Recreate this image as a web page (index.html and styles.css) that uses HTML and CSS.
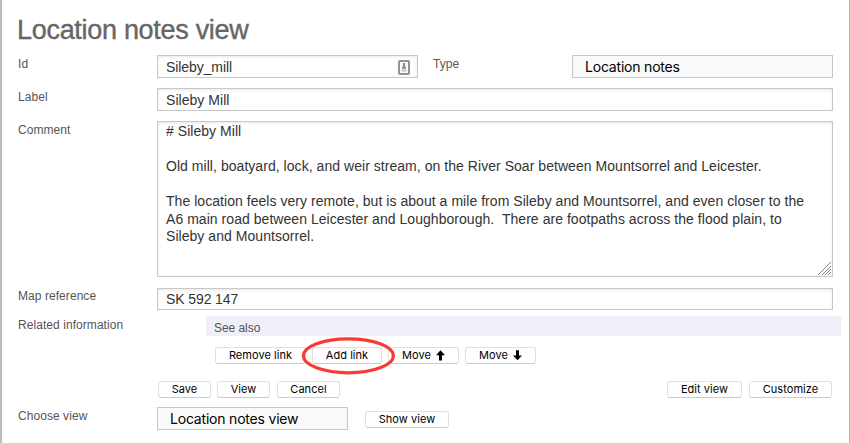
FILE: index.html
```html
<!DOCTYPE html>
<html lang="en">
<head>
<meta charset="utf-8">
<title>Location notes view</title>
<link rel="stylesheet" href="styles.css">
</head>
<body>
<main class="page">
  <h1>Location notes view</h1>
  <div class="row row-id">
    <label>Id</label>
    <div class="field id-field"><span>Sileby_mill</span>
      <svg class="card" width="12" height="15" viewBox="0 0 12 15"><rect x="1" y="1" width="10" height="13" rx="1" fill="#fafafa" stroke="#929292" stroke-width="2"/><path d="M6 3v4" stroke="#888" stroke-width="2"/><path d="M4 6.5h4V9H4z" fill="#999"/><path d="M3.5 10.5h5" stroke="#c0c0c0" stroke-width="2"/></svg>
    </div>
    <label class="type-label">Type</label>
    <div class="select type-select">Location notes</div>
  </div>
  <div class="row row-label">
    <label>Label</label>
    <div class="field wide">Sileby Mill</div>
  </div>
  <div class="row row-comment">
    <label>Comment</label>
    <div class="area"><p># Sileby Mill

Old mill, boatyard, lock, and weir stream, on the River Soar between Mountsorrel and Leicester.

The location feels very remote, but is about a mile from Sileby and Mountsorrel, and even closer to the
A6 main road between Leicester and Loughborough.  There are footpaths across the flood plain, to
Sileby and Mountsorrel.</p>
      <svg class="grip" width="13" height="13" viewBox="0 0 13 13" shape-rendering="crispEdges"><path d="M0 13 13 0M4 13 13 4M7 13 13 7M10 13 13 10" stroke="#858585"/></svg>
    </div>
  </div>
  <div class="row row-map">
    <label>Map reference</label>
    <div class="field wide map">SK 592 147</div>
  </div>
  <div class="row row-related">
    <label>Related information</label>
    <div class="related">
      <div class="see">See also</div>
      <div class="buttons links">
        <button class="b-remove">Remove link</button>
        <div class="marked"><button class="b-add">Add link</button>
          <svg class="ring" width="96" height="42" viewBox="0 0 96 42"><ellipse cx="47.4" cy="19.8" rx="45" ry="17" fill="none" stroke="#f93a34" stroke-width="3.2"/></svg>
        </div>
        <button class="b-up">Move<svg width="9" height="11" viewBox="0 0 9 11"><path d="M4.5.2 9 5.2H6v5.3H3V5.2H0z"/></svg></button>
        <button class="b-down">Move<svg width="9" height="11" viewBox="0 0 9 11"><path d="M4.5 10.3 9 5.4H6V.2H3v5.2H0z"/></svg></button>
      </div>
    </div>
  </div>
  <div class="row row-actions">
    <div class="buttons">
      <button class="b-save">Save</button>
      <button class="b-view">View</button>
      <button class="b-cancel">Cancel</button>
    </div>
    <div class="buttons right">
      <button class="b-edit">Edit view</button>
      <button class="b-custom">Customize</button>
    </div>
  </div>
  <div class="row row-choose">
    <label>Choose view</label>
    <div class="select view-select">Location notes view</div>
    <button class="b-show">Show view</button>
  </div>
</main>
</body>
</html>
```
FILE: styles.css
```css
* { box-sizing: border-box; }
body { margin: 0; background: #fff; overflow: hidden; }
.page {
  width: 850px; height: 443px;
  border-left: 2px solid #bbb; border-right: 1px solid #b5b5b5;
  padding: 14px 16px 0 16px;
  font: 12px/14px "Liberation Sans", Arial, sans-serif;
  color: #555;
}
h1 {
  margin: 0 0 9px -1px; height: 32px;
  font-size: 27px; line-height: 32px; font-weight: 400;
  letter-spacing: -0.3px; color: #666;
  -webkit-text-stroke: 0.4px #666;
  white-space: nowrap;
}
.row { display: flex; align-items: flex-start; }
label { width: 139px; flex: none; padding-top: 2px; letter-spacing: 0.06px; white-space: nowrap; }
.row-id { height: 33px; }
.row-label { height: 33px; }
.row-comment { height: 167px; }
.row-map { height: 28px; }
.row-related { height: 65px; }
.row-actions { height: 26px; }
.row-map label { padding-top: 1px; }
.row-related label { width: 188px; }
.field, .area {
  border: 1px solid #c8c8c8;
  box-shadow: inset 0 1px 3px rgba(0, 0, 0, 0.1);
  font-size: 14px; letter-spacing: 0.045px; color: #333; white-space: pre;
}
.field { height: 23px; padding-left: 8px; line-height: 23px; }
.map { height: 22px; line-height: 20px; letter-spacing: -0.1px; }
.wide { width: 676px; }
.id-field { width: 261px; display: flex; justify-content: space-between; letter-spacing: -0.08px; }
.card { margin: 4px 7px 0 0; }
.type-label { margin-left: 15px; }
.area { position: relative; width: 676px; height: 156px; padding-left: 8px; }
.area p { margin: 1px 0 0; line-height: 17.5px; }
.grip { position: absolute; right: 1px; bottom: 1px; }
.select, button { font-family: Inter, sans-serif; color: #000; white-space: nowrap; }
.select {
  height: 23px; border: 1px solid #c8c8c8; background: #f9f9f9;
  padding-left: 12px; line-height: 22px; font-size: 14px; letter-spacing: -0.2px;
}
.type-select { width: 261px; }
.view-select { width: 191px; }
button {
  display: flex; align-items: center; justify-content: center; gap: 5px;
  height: 17px; padding: 0; border: 1px solid #e0e0e0; border-bottom-color: #cbcbcb;
  border-radius: 3px; background: #fff; font-size: 11px; line-height: 15px;
  letter-spacing: 0.05px;
}
.related { width: 635px; flex: none; }
.see { height: 20px; background: #efeff9; padding: 4px 0 0 8px; line-height: 16px; letter-spacing: -0.05px; }
.buttons { display: flex; }
.links { margin: 11px 0 0 9px; }
.marked { position: relative; margin: 0 6px; }
.ring { position: absolute; left: -11px; top: -11px; }
.b-remove { width: 91px; }
.b-add { width: 70px; }
.b-up { width: 71px; margin-right: 6px; }
.b-down { width: 71px; }
.row-actions { padding-left: 140px; }
.b-save { width: 53px; margin-right: 6px; }
.b-view { width: 53px; margin-right: 7px; }
.b-cancel { width: 63px; }
.right { margin-left: 327px; }
.b-edit { width: 75px; margin-right: 7px; }
.b-custom { width: 83px; }
.b-show { width: 84px; margin: 4px 0 0 17px; }
```
